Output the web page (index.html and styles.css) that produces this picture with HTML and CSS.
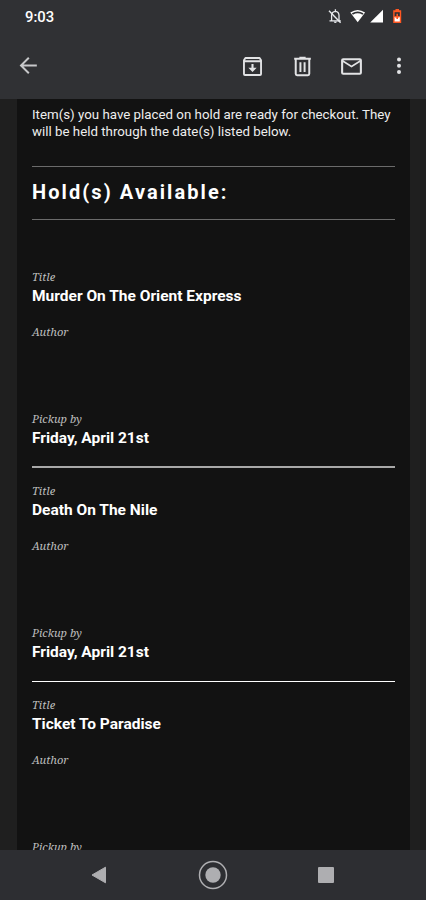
FILE: index.html
```html
<!DOCTYPE html>
<html lang="en">
<head>
<meta charset="utf-8">
<title>Hold notice</title>
<link rel="stylesheet" href="styles.css">
</head>
<body>
<div class="phone">
  <header class="top">
    <div class="status">
      <span class="clock">9:03</span>
      <svg class="status-icons" width="78" height="18" viewBox="0 0 78 18">
        <g fill="none" stroke="#e8eaed" stroke-width="1.3">
          <path d="M3.6 12.9V7.2Q3.8 3.7 7.5 3.3Q10.8 3.7 11 7.2V12.9M1.5 12.9H12.8M7.4 1.3V3.3"/>
          <path d="M1 2.8L12.6 14.8" stroke-width="1.4"/>
        </g>
        <path d="M5.8 13.6h3q-.2 1.5-1.5 1.5t-1.5-1.5z" fill="#e8eaed"/>
        <path d="M22.3 4.6Q29.7-.6 37.1 4.6L29.7 14.2z" fill="#fff"/>
        <path d="M23.9 5.3Q29.7 1.7 35.5 5.3L34.5 6.7Q29.7 3.8 24.9 6.7z" fill="#303134"/>
        <path d="M42.2 14.6L55 1.8V14.6z" fill="#fff"/>
        <path d="M67.5 1h3.5v1.3h2.2v12.6h-8V2.3h2.3z" fill="#ff5722"/>
        <path d="M66.6 4.2h5.2v4.5h-5.2z" fill="#303134"/>
        <path d="M66.6 8.7h5.2v4.8h-5.2z" fill="#fff"/>
        <path d="M68.4 5.8h1.6v2.2h1.4v1.4h-1.4v1.6h-1.6v-1.6h-1.4V8h1.4z" fill="#ff5722"/>
      </svg>
    </div>
    <div class="toolbar">
      <svg class="back" width="25" height="25" viewBox="0 0 24 24"><path d="M20 12H5M12.3 4.5L4.8 12l7.5 7.5" fill="none" stroke="#c7c8ca" stroke-width="1.9"/></svg>
      <svg class="action" viewBox="0 0 24 24"><path d="M5.2 3.8h13.6L20.2 6v13.2q0 1-1 1H4.8q-1 0-1-1V6zM4 6.9h16" fill="none" stroke="#e2e3e5" stroke-width="1.8" stroke-linejoin="round"/><path d="M11 9.5h2v3.7h3l-4 4-4-4h3z" fill="#e2e3e5"/></svg>
      <svg class="action" viewBox="0 0 24 24"><path d="M5.5 5v14q0 1.3 1.3 1.3h10.4q1.3 0 1.3-1.3V5M4 4.5h16M9 3.6h6M10 8v9.3M14 8v9.3" fill="none" stroke="#e2e3e5" stroke-width="1.9"/></svg>
      <svg class="action" viewBox="0 0 24 24"><path d="M22 6q0-2-2-2H4Q2 4 2 6v12q0 2 2 2h16q2 0 2-2zM20 6l-8 5-8-5zM20 18H4V8l8 5 8-5z" fill="#e2e3e5" fill-rule="evenodd"/></svg>
      <svg class="more" width="8" height="20" viewBox="0 0 8 20" fill="#e2e3e5"><circle cx="4" cy="3.4" r="2"/><circle cx="4" cy="9.8" r="2"/><circle cx="4" cy="16" r="2"/></svg>
    </div>
  </header>

  <main class="message">
    <article class="mail">
      <p class="intro">Item(s) you have placed on hold are ready for checkout. They<br>will be held through the date(s) listed below.</p>
      <h1>Hold(s) Available:</h1>
      <section class="hold first">
        <div class="label">Title</div>
        <div class="value">Murder On The Orient Express</div>
        <div class="label author">Author</div>
        <div class="label pickup">Pickup by</div>
        <div class="value">Friday, April 21st</div>
      </section>
      <section class="hold">
        <div class="label">Title</div>
        <div class="value">Death On The Nile</div>
        <div class="label author">Author</div>
        <div class="label pickup">Pickup by</div>
        <div class="value">Friday, April 21st</div>
      </section>
      <section class="hold">
        <div class="label">Title</div>
        <div class="value">Ticket To Paradise</div>
        <div class="label author">Author</div>
        <div class="label pickup">Pickup by</div>
      </section>
    </article>
  </main>

  <nav class="navbar">
    <svg width="16" height="18" viewBox="0 0 16 18"><path d="M1 9L14.5 1.2V16.8z" fill="#aeaeb1" stroke="#aeaeb1" stroke-linejoin="round"/></svg>
    <svg width="30" height="30" viewBox="0 0 30 30"><circle cx="15" cy="15" r="13.5" fill="none" stroke="#aeaeb1" stroke-width="1.5"/><circle cx="15" cy="15" r="7.7" fill="#aeaeb1"/></svg>
    <svg width="16" height="16" viewBox="0 0 16 16"><rect width="16" height="16" rx="1" fill="#aeaeb1"/></svg>
  </nav>
</div>
</body>
</html>
```
FILE: styles.css
```css
* { box-sizing: border-box; }
body { margin: 0; background: #1f1f1f; font-family: Roboto, sans-serif; color: #fff; }
svg { display: block; flex: none; }
.phone { width: 426px; height: 900px; display: flex; flex-direction: column; overflow: hidden; }
.top { height: 99px; flex: none; background: #303134; }
.status { height: 34px; padding: 8px 19px 0 25px; display: flex; justify-content: space-between; }
.clock { font-size: 14.8px; font-weight: 500; line-height: 19px; }
.status-icons { margin-right: 1px; }
.toolbar { height: 63px; padding: 0 23px 0 16px; display: flex; align-items: center; }
.back { margin-right: auto; }
.action { width: 25px; height: 25px; margin: 1px 24.7px 0 0; }
.more { margin: 1px 0 0 6px; }
.message { flex: 1; min-height: 0; overflow: hidden; padding: 0 16px 0 17px; }
.mail { height: 100%; overflow: hidden; background: #121212; padding: 7px 15px 0; }
.intro { margin: 0 0 26px; height: 34px; font-size: 13.3px; line-height: 17px; color: #eee; white-space: nowrap; }
h1 { margin: 0 0 35px; height: 54px; border: solid #6b6b6b; border-width: 1px 0; font-size: 20px; font-weight: 700; line-height: 50px; letter-spacing: 2.08px; }
.hold { height: 214px; padding-top: 16px; border-bottom: 1px solid #fff; }
.first { height: 213px; padding-top: 15px; border-bottom: 2px solid #a8a8a8; }
.hold.first { margin-bottom: 0; }
.label { height: 14px; line-height: 14px; font-family: "Noto Serif", "DejaVu Serif Condensed", "DejaVu Serif", serif; font-style: italic; font-size: 11.1px; color: #bdbdbd; }
.value { height: 24px; line-height: 24px; font-size: 15.5px; font-weight: 700; }
.author { margin-top: 17px; }
.pickup { margin-top: 73px; }
.navbar { height: 50px; flex: none; background: #2d2e32; display: flex; align-items: center; justify-content: space-between; padding: 0 92px 0 91px; }
```
